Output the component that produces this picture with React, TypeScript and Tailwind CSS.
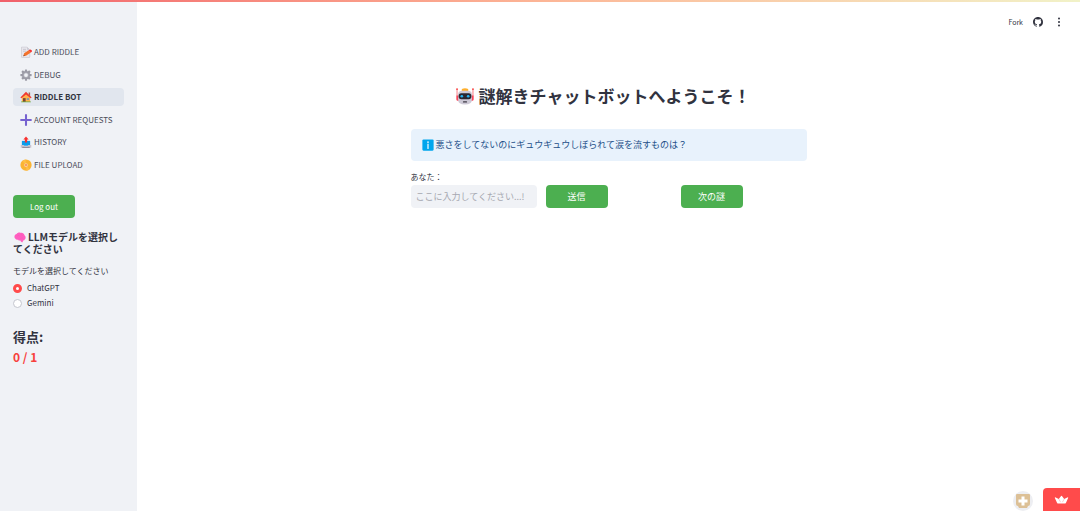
import React, { useState } from "react";

type IconProps = { className?: string };

const MemoIcon = ({ className }: IconProps) => (
  <svg viewBox="0 0 32 32" className={className} aria-hidden="true">
    <path d="M4 3h15l7 7v19a2 2 0 0 1-2 2H6a2 2 0 0 1-2-2z" fill="#e8e7ed" stroke="#c2c0ca" strokeWidth="1.5" />
    <path d="M19 3v7h7" fill="#c9c7d2" />
    <path d="M8 9h8M8 14h8" stroke="#b5b3bf" strokeWidth="1.600" />
    <path d="M9 27l2-8 12-8 6 6-13 9z" fill="#f4722b" />
    <path d="M23 11l4-2q2 0 4 2t0 4l-2 2z" fill="#f8312f" />
    <path d="M9 27l1-4 3 3z" fill="#6b4a3d" />
  </svg>
);

const GearIcon = ({ className }: IconProps) => (
  <svg viewBox="0 0 32 32" className={className} aria-hidden="true">
    <g fill="#9b9ba6">
      {[0, 45, 90, 135].map((angle) => (
        <rect key={angle} x="13" y="1" width="6" height="30" rx="1.5" transform={`rotate(${angle} 16 16)`} />
      ))}
      <circle cx="16" cy="16" r="11" />
    </g>
    <circle cx="16" cy="16" r="7" fill="#b3b3bd" />
    <circle cx="16" cy="16" r="5" fill="#f0f2f6" />
  </svg>
);

const HouseIcon = ({ className }: IconProps) => (
  <svg viewBox="0 0 32 32" className={className} aria-hidden="true">
    <path d="M23 4h4v9h-4z" fill="#a56953" />
    <path d="M5 15L16 5l11 10v14H5z" fill="#ffb24d" />
    <path d="M1 17L16 2l15 15-2.500 2.500L16 9 3.500 19.500z" fill="#f03a32" />
    <path d="M8 19h7v10H8z" fill="#7d4533" />
    <path d="M18 19h6v5h-6z" fill="#7f98a8" />
    <path d="M3 28h26v2H3z" fill="#5fa843" />
  </svg>
);

const PlusIcon = ({ className }: IconProps) => (
  <svg viewBox="0 0 32 32" className={className} aria-hidden="true">
    <path d="M16 3v26M3 16h26" stroke="#7662d0" strokeWidth="5.500" strokeLinecap="round" />
  </svg>
);

const OutboxIcon = ({ className }: IconProps) => (
  <svg viewBox="0 0 32 32" className={className} aria-hidden="true">
    <path d="M5 13h22v13H5z" fill="#0c9ceb" />
    <path d="M2 24h8l2 3h8l2-3h8v7H2z" fill="#c9c4d0" />
    <path d="M6 29h20v2H6z" fill="#6d6675" />
    <path d="M16 1l7 8h-4v8h-6V9H9z" fill="#f8312f" />
  </svg>
);

const DiscIcon = ({ className }: IconProps) => (
  <svg viewBox="0 0 32 32" className={className} aria-hidden="true">
    <circle cx="16" cy="16" r="15" fill="#fbb432" />
    <path d="M16 16L6 5a15 15 0 0 1 9-4zM16 16l10 11a15 15 0 0 1-9 4z" fill="#ffbe48" />
    <circle cx="16" cy="16" r="5" fill="#fbd0a0" />
    <circle cx="16" cy="16" r="2.500" fill="#f5844c" />
  </svg>
);

const BrainIcon = ({ className }: IconProps) => (
  <svg viewBox="0 0 32 32" className={className} aria-hidden="true">
    <path d="M3 20C-1 15 2 9 7 8c2-4 8-5 11-3 5-1 9 2 10 6 4 3 4 10 0 12-1 2-3 2-4 2l-1 5c-3 0-5-2-6-5-3 1-5 0-6-2-3 1-6 0-8-3z" fill="#ff5fc0" />
    <path d="M9 13c2-2 5-1 6 1M18 9c2 0 4 2 4 4M17 20c2-2 5-2 7 0" fill="none" stroke="#fa55b8" strokeWidth="1.500" />
  </svg>
);

const RobotIcon = ({ className }: IconProps) => (
  <svg viewBox="0 0 36 32" className={className} aria-hidden="true">
    <path d="M3 2v20M33 2v20" stroke="#f8656f" strokeWidth="1.600" />
    <circle cx="3" cy="2" r="1.600" fill="#f8312f" />
    <circle cx="33" cy="2" r="1.600" fill="#f8312f" />
    <path d="M2 14h5v10H4a2 2 0 0 1-2-2zM29 14h5v8a2 2 0 0 1-2 2h-3z" fill="#f8455a" />
    <path d="M12 2q6-3 12 0v4H12z" fill="#ffb02e" />
    <path d="M11 5h14q6 1 6 7v10q0 9-13 9T5 22V12q0-6 6-7z" fill="#cdc9d6" />
    <rect x="6" y="10" width="24" height="11" rx="5" fill="#28262f" />
    <circle cx="12" cy="15.500" r="2.500" fill="#26b4f5" />
    <circle cx="24" cy="15.500" r="2.500" fill="#26b4f5" />
    <rect x="14" y="25" width="8" height="2.500" rx="1.200" fill="#3f3b47" />
  </svg>
);

const InfoIcon = ({ className }: IconProps) => (
  <svg viewBox="0 0 32 32" className={className} aria-hidden="true">
    <rect x="1" y="1" width="30" height="30" rx="3" fill="#00a6ed" />
    <circle cx="16" cy="8.500" r="2.200" fill="#fff" />
    <path d="M16 13.500V25" stroke="#fff" strokeWidth="3.200" strokeLinecap="round" />
  </svg>
);

const GithubIcon = ({ className }: IconProps) => (
  <svg viewBox="0 0 16 16" className={className} aria-hidden="true" fill="currentColor">
    <path d="M8 0C3.580 0 0 3.580 0 8c0 3.540 2.290 6.530 5.470 7.590.4.070.55-.17.55-.38 0-.19-.01-.82-.01-1.490-2.010.37-2.530-.49-2.690-.94-.09-.23-.48-.94-.82-1.130-.28-.15-.68-.52-.01-.53.63-.01 1.080.58 1.230.82.72 1.210 1.870.87 2.330.66.07-.52.28-.87.51-1.070-1.780-.2-3.640-.89-3.640-3.950 0-.87.31-1.590.82-2.150-.08-.2-.36-1.020.08-2.120 0 0 .67-.21 2.200.82A7.600 7.600 0 0 1 8 3.870c.68 0 1.360.09 2 .26 1.530-1.040 2.200-.82 2.200-.82.44 1.100.16 1.920.08 2.120.51.56.82 1.270.82 2.150 0 3.070-1.870 3.750-3.650 3.950.29.25.54.73.54 1.480 0 1.070-.01 1.930-.01 2.200 0 .21.15.46.55.38A8.010 8.010 0 0 0 16 8c0-4.420-3.580-8-8-8z" />
  </svg>
);

const DotsIcon = ({ className }: IconProps) => (
  <svg viewBox="0 0 12 12" className={className} aria-hidden="true" fill="currentColor">
    <circle cx="6" cy="2.500" r="1" />
    <circle cx="6" cy="6" r="1" />
    <circle cx="6" cy="9.500" r="1" />
  </svg>
);

const CrownIcon = ({ className }: IconProps) => (
  <svg viewBox="0 0 32 20" className={className} aria-hidden="true">
    <path d="M1 6q-1-1 1-1l8 4 5-7q1-1 2 0l5 7 8-4q2 0 1 1l-5 11q-1 2-3 2H9q-2 0-3-2z" fill="#fff" />
    <path d="M10 9l4 7M22 9l-4 7" stroke="#ff9a9a" strokeWidth="1.200" />
  </svg>
);

const AvatarIcon = ({ className }: IconProps) => (
  <svg viewBox="0 0 20 20" className={className} aria-hidden="true">
    <circle cx="10" cy="10" r="10" fill="#edeef2" />
    <path d="M4 3h12q1 0 1 1v9q0 2-2 2l-1 2H6l-1-2q-2 0-2-2V4q0-1 1-1z" fill="#dcc096" />
    <path d="M10 5.500v9M5.500 10h9" stroke="#fff" strokeWidth="3" />
  </svg>
);

const pages = [
  { label: "ADD RIDDLE", Icon: MemoIcon },
  { label: "DEBUG", Icon: GearIcon },
  { label: "RIDDLE BOT", Icon: HouseIcon },
  { label: "ACCOUNT REQUESTS", Icon: PlusIcon },
  { label: "HISTORY", Icon: OutboxIcon },
  { label: "FILE UPLOAD", Icon: DiscIcon },
];

const models = ["ChatGPT", "Gemini"];

function Sidebar() {
  const [model, setModel] = useState("ChatGPT");
  return (
    <aside className="w-[137px] shrink-0 bg-[#f0f2f6] px-[13px] pt-[41px]">
      <nav className="flex h-[131px] flex-col justify-between">
        {pages.map(({ label, Icon }) => {
          const active = label === "RIDDLE BOT";
          return (
            <a
              key={label}
              href="#"
              aria-current={active ? "page" : undefined}
              className={
                active
                  ? "flex h-[18px] items-center gap-0.5 rounded-sm bg-[#e1e6ee] px-[7px] text-[8px] font-bold whitespace-nowrap text-[#31333f]"
                  : "flex h-[18px] items-center gap-0.5 rounded-sm px-[7px] text-[8px] whitespace-nowrap text-[#4b4d59]"
              }
            >
              <Icon className="size-3 shrink-0" />
              {label}
            </a>
          );
        })}
      </nav>
      <button type="button" className="mt-[21px] block h-[23px] w-[62px] rounded bg-[#4caf50] text-[8px] leading-3 text-white">
        Log out
      </button>
      <h3 className="mt-[13px] text-[10px] leading-3 font-bold">
        <BrainIcon className="mr-0.5 ml-px inline size-3 align-[-2px]" />
        LLMモデルを選択してください
      </h3>
      <fieldset className="mt-[10px]">
        <legend className="text-[8px] leading-3 whitespace-nowrap">モデルを選択してください</legend>
        <div className="mt-[5px] flex flex-col gap-[3px]">
          {models.map((name) => (
            <label key={name} className="flex h-3 items-center gap-[5px] text-[8px] leading-3">
              <input
                type="radio"
                name="model"
                checked={model === name}
                onChange={() => setModel(name)}
                className="size-[9px] appearance-none rounded-full border border-[#c4c6ce] bg-white checked:border-3 checked:border-[#ff4b4b]"
              />
              {name}
            </label>
          ))}
        </div>
      </fieldset>
      <h2 className="mt-[18px] text-[13px] leading-5 font-bold">得点:</h2>
      <p className="text-[12px] leading-5 font-bold text-[#f8403c]">0 / 1</p>
    </aside>
  );
}

export default function App() {
  const greenButton = "h-[23px] w-[62px] rounded bg-[#4caf50] text-[9px] leading-3 text-white";
  return (
    <div className="flex min-h-screen flex-col bg-white font-['Noto_Sans_CJK_JP',sans-serif] text-[#31333f]">
      <div className="h-0.5 bg-linear-to-r from-[#f0606a] via-[#fcb596] to-[#f1f2c8]" />
      <div className="flex grow">
        <Sidebar />
        <div className="flex min-w-0 grow flex-col">
          <header className="flex h-[39px] items-center justify-end gap-[10px] pr-[15px]">
            <button type="button" className="text-[7px] leading-3">Fork</button>
            <a href="#" aria-label="GitHub"><GithubIcon className="size-[10px]" /></a>
            <button type="button" aria-label="Menu"><DotsIcon className="size-3" /></button>
          </header>
          <main className="mx-auto w-full max-w-[396px] pt-[43px]">
            <h1 className="flex items-center justify-center gap-1 pr-3 text-[17px] leading-6 font-bold whitespace-nowrap">
              <RobotIcon className="h-[17px] w-5" />
              謎解きチャットボットへようこそ！
            </h1>
            <div className="mt-[21px] flex h-8 items-center gap-0.5 rounded bg-[#e8f2fc] px-[11px] text-[9px] leading-4 text-[#1d4f88]">
              <InfoIcon className="size-3 shrink-0" />
              <p>悪さをしてないのにギュウギュウしぼられて涙を流すものは？</p>
            </div>
            <label htmlFor="answer" className="mt-2 block text-[8px] leading-4">あなた：</label>
            <div className="grid grid-cols-3 gap-[9px]">
              <input
                id="answer"
                type="text"
                placeholder="ここに入力してください...!"
                className="h-[23px] w-full min-w-0 rounded bg-[#f0f2f6] px-[5px] text-[9px] placeholder:text-[#a6a8b1] focus:outline-none"
              />
              <button type="button" className={greenButton}>送信</button>
              <button type="button" className={greenButton}>次の謎</button>
            </div>
          </main>
          <footer className="mt-auto flex items-end justify-end gap-[10px]">
            <a href="#" aria-label="Creator profile"><AvatarIcon className="size-5" /></a>
            <a href="#" aria-label="Hosted app" className="flex h-[23px] w-[37px] items-center justify-center rounded-tl bg-[#ff4b4b]">
              <CrownIcon className="h-[9px] w-[15px]" />
            </a>
          </footer>
        </div>
      </div>
    </div>
  );
}
